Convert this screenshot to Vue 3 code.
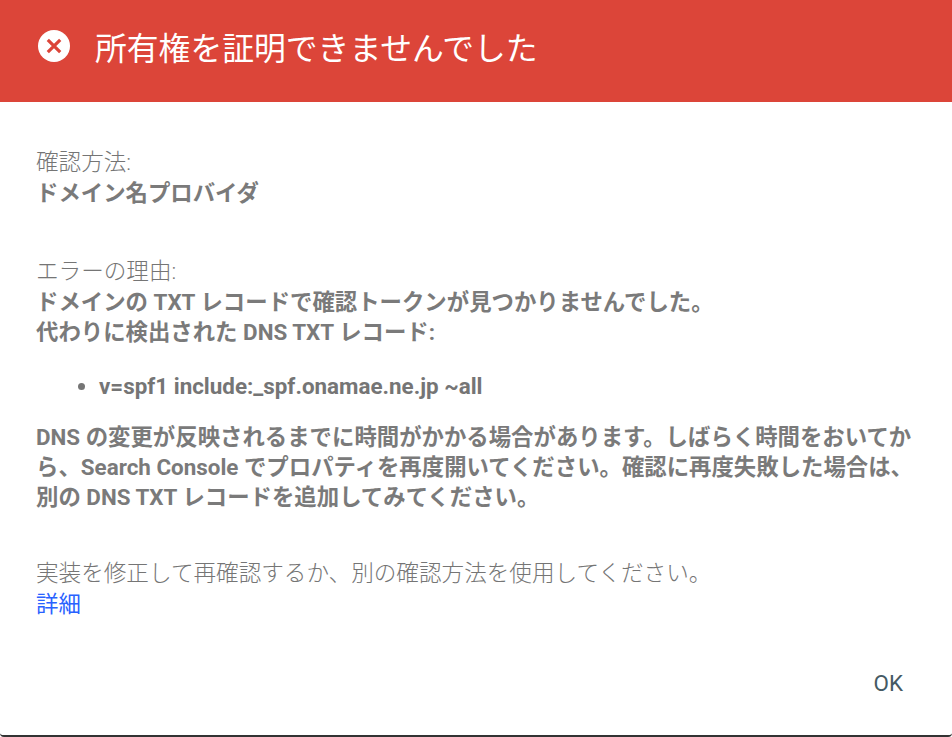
<template>
  <div class="dialog">
    <header class="head">
      <svg class="err-icon" viewBox="0 0 32 32" width="32" height="32">
        <circle cx="16" cy="16" r="16" fill="#fff" />
        <path d="M9.8 9.8 L22.2 22.2 M22.2 9.8 L9.8 22.2" stroke="#dc4539" stroke-width="3.2" fill="none" />
      </svg>
      <h1 class="title">所有権を証明できませんでした</h1>
    </header>
    <main class="body">
      <section class="block first">
        <div class="label">確認方法:</div>
        <div class="strong">ドメイン名プロバイダ</div>
      </section>
      <section class="block second">
        <div class="label">エラーの理由:</div>
        <div class="strong">ドメインの TXT レコードで確認トークンが見つかりませんでした。</div>
        <div class="strong">代わりに検出された DNS TXT レコード:</div>
        <ul class="records">
          <li v-for="r in records" :key="r">{{ r }}</li>
        </ul>
        <p class="strong note">DNS の変更が反映されるまでに時間がかかる場合があります。しばらく時間をおいてから、Search Console でプロパティを再度開いてください。確認に再度失敗した場合は、別の DNS TXT レコードを追加してみてください。</p>
      </section>
      <section class="block third">
        <div class="label">実装を修正して再確認するか、別の確認方法を使用してください。</div>
        <a class="link" href="#">詳細</a>
      </section>
    </main>
    <footer class="foot">
      <button class="ok">OK</button>
    </footer>
  </div>
</template>

<script setup>
const records = ['v=spf1 include:_spf.onamae.ne.jp ~all']
</script>

<style>
html, body {
  margin: 0;
  background: #fff;
}
</style>

<style scoped>
.dialog {
  width: 952px;
  height: 737px;
  box-sizing: border-box;
  display: flex;
  flex-direction: column;
  background: #fff;
  font-family: Roboto, "Noto Sans CJK JP", sans-serif;
  border-bottom: 2px solid #333;
  border-radius: 0 0 4px 4px;
}

.head {
  height: 102px;
  flex: none;
  display: flex;
  align-items: center;
  gap: 25px;
  padding-left: 38px;
  padding-bottom: 10px;
  box-sizing: border-box;
  background: #dc4539;
}

.err-icon {
  flex: none;
}

.title {
  margin: 0;
  font-size: 31.8px;
  font-weight: 400;
  color: #fff;
}

.body {
  flex: 1;
  padding: 46px 30px 0 36px;
  font-size: 22.4px;
  line-height: 30px;
  color: #757575;
}

.block {
  margin: 0;
}

.second {
  margin-top: 49px;
}

.third {
  margin-top: 47px;
}

.label {
  font-size: 22.6px;
  font-weight: 300;
  color: #757575;
}

.strong {
  font-weight: 700;
  color: #7a7a7a;
}

.records {
  margin: 24px 0 21px;
  padding-left: 63px;
}

.records li {
  font-weight: 700;
}

.note {
  margin: 0;
}

.link {
  color: #2962ff;
  font-weight: 400;
  text-decoration: none;
}

.foot {
  flex: none;
  display: flex;
  justify-content: flex-end;
  padding: 0 49px 39px 0;
}

.ok {
  border: 0;
  padding: 0;
  background: none;
  font: 400 22.4px Roboto, sans-serif;
  color: #455a64;
}
</style>
